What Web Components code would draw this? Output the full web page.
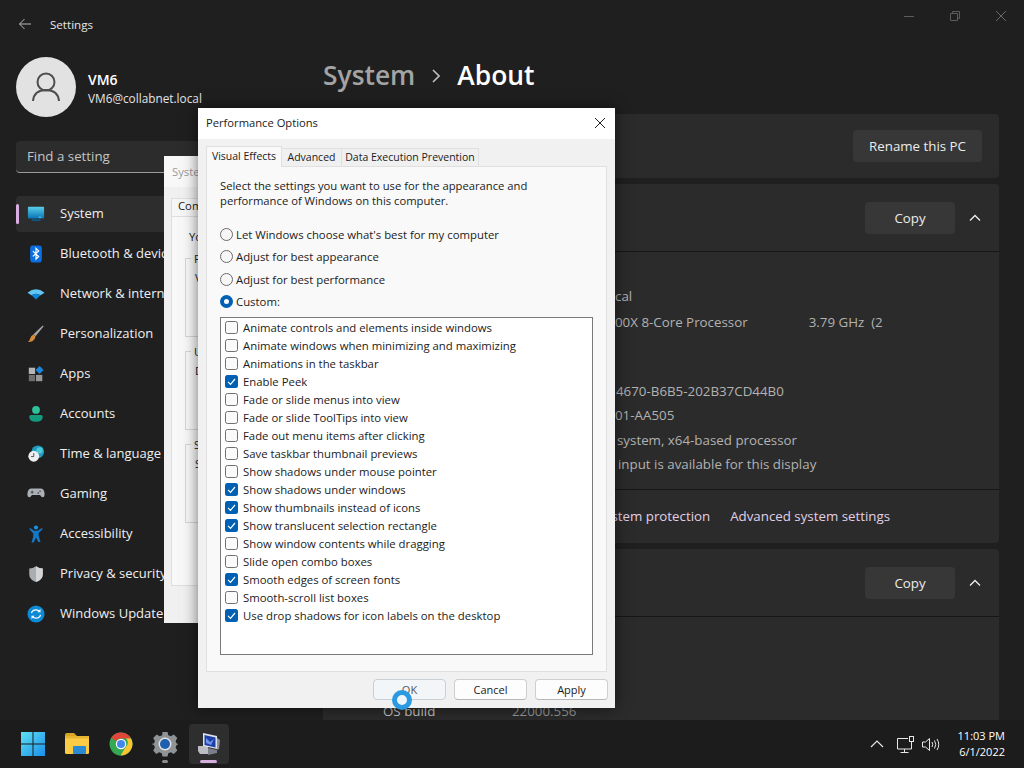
<!DOCTYPE html>
<html lang="en">
<head>
<meta charset="utf-8">
<title>Settings - About</title>
<style>
  html, body { margin: 0; height: 100%; overflow: hidden; }
  body { width: 1024px; height: 768px; position: relative; background: #1f1f1f; font-family: "Open Sans", "Noto Sans", sans-serif; }
  svg { display: block; }
</style>
</head>
<body>

<settings-shell>
  <nav-item slot="nav" selected label="System"><svg viewBox="0 0 20 20" width="18" height="18"><defs><linearGradient id="mon" x1="0" y1="0" x2="0" y2="1"><stop offset="0" stop-color="#58cdea"/><stop offset="1" stop-color="#0874b4"/></linearGradient></defs><rect x="1" y="2" width="18" height="13" rx="1" fill="url(#mon)"/><rect x="5" y="16" width="10" height="1.600" fill="#0a5f96"/><rect x="13" y="13" width="3" height="1" fill="#7fd4ee"/></svg></nav-item>
  <nav-item slot="nav" label="Bluetooth &amp; devices"><svg viewBox="0 0 20 20" width="18" height="18"><path d="M6.500 0.500h7q3 0 3 3.500v11q0 4.500-3 4.500h-7q-3 0-3-4.500v-11q0-3.500 3-3.500z" fill="#0a6fe0"/><path d="M6.500 6.800l6.500 6-3 2.800V3.800l3 2.800-6.500 6" fill="none" stroke="#fff" stroke-width="1.300"/></svg></nav-item>
  <nav-item slot="nav" label="Network &amp; internet"><svg viewBox="0 0 20 20" width="18" height="18"><path d="M0.500 8.500Q10 0.800 19.500 8.500l-4.500 3Q10 8 5 11.500z" fill="#62c6f2"/><path d="M5 11.500Q10 8 15 11.500l-5 4.500z" fill="#1086d6"/></svg></nav-item>
  <nav-item slot="nav" label="Personalization"><svg viewBox="0 0 20 20" width="18" height="18"><path d="M17.500 0.500l1 1L9.500 12.500l-2.500-2z" fill="#a7a7a7"/><path d="M7 10.500l2.500 2.200q-.5 4-3.500 5.300-2.500 1-5 .8 2-1.300 2.500-3.800.5-3 3.500-4.500z" fill="#d58a3c"/></svg></nav-item>
  <nav-item slot="nav" label="Apps"><svg viewBox="0 0 20 20" width="18" height="18"><rect x="2" y="3" width="7" height="7" fill="#b5b5b5"/><rect x="2" y="11" width="7" height="7" fill="#6e6e6e"/><rect x="10" y="11" width="7" height="7" fill="#989898"/><path d="M14 1l4.500 4.500-4.500 4.500-4.500-4.500z" fill="#1a86dc"/></svg></nav-item>
  <nav-item slot="nav" label="Accounts"><svg viewBox="0 0 20 20" width="18" height="18"><circle cx="10" cy="5.500" r="4.300" fill="#2fc09c"/><path d="M2.500 13q0-2 2-2h11q2 0 2 2 0 5.500-7.500 5.500T2.500 13z" fill="#149b7e"/></svg></nav-item>
  <nav-item slot="nav" label="Time &amp; language"><svg viewBox="0 0 20 20" width="18" height="18"><circle cx="12" cy="7.500" r="7" fill="#1f9bc0"/><circle cx="14" cy="6" r="3.500" fill="#4cc8d8"/><circle cx="7.500" cy="12.500" r="6" fill="#eceff2"/><path d="M7.500 9v3.800h-3" fill="none" stroke="#445" stroke-width="1"/></svg></nav-item>
  <nav-item slot="nav" label="Gaming"><svg viewBox="0 0 20 20" width="18" height="18"><path d="M5 4h10q4 0 4.500 5.500.3 4-2 4-1.500 0-3-2.500H5.500q-1.500 2.500-3 2.500-2.300 0-2-4Q1 4 5 4z" fill="#aab0b5"/><path d="M4 8h3.500M5.700 6.300v3.400" stroke="#444" stroke-width="1"/><circle cx="14.500" cy="7" r=".9" fill="#444"/><circle cx="12.500" cy="9" r=".9" fill="#444"/></svg></nav-item>
  <nav-item slot="nav" label="Accessibility"><svg viewBox="0 0 20 20" width="18" height="18"><circle cx="10" cy="2.800" r="2.300" fill="#1a90e0"/><path d="M2.500 4.500l1-1.200 4.500 3h4l4.500-3 1 1.200-4.500 4.500v3l2 7h-2.500L10 14l-2.500 5.500H5l2-7v-3z" fill="#1478c8"/></svg></nav-item>
  <nav-item slot="nav" label="Privacy &amp; security"><svg viewBox="0 0 20 20" width="18" height="18"><path d="M10 1.500q3.500 2.500 7.500 2.500v6.500q0 5.500-7.500 8.500-7.500-3-7.500-8.500V4Q6.500 4 10 1.500z" fill="#a9adb0"/><path d="M10 1.500q3.500 2.500 7.500 2.500v6.500q0 5.500-7.500 8.500z" fill="#d3d5d6"/></svg></nav-item>
  <nav-item slot="nav" label="Windows Update"><svg viewBox="0 0 20 20" width="18" height="18"><circle cx="10" cy="10" r="9.500" fill="#0d8ad6"/><path d="M5 9q.8-3.700 5-3.700 2.500 0 4 2M15 11q-.8 3.700-5 3.700-2.500 0-4-2" fill="none" stroke="#fff" stroke-width="1.400"/><path d="M15 4.500v3.500h-3.500zM5 15.500V12h3.500z" fill="#fff"/></svg></nav-item>

  <info-card>
    <card-button>Rename this PC</card-button>
  </info-card>

  <info-card collapsible>
    <spec-row>cal</spec-row>
    <spec-row style="margin-top:1.600px">00X 8-Core Processor<span style="display:inline-block;width:61px"></span>3.79 GHz&nbsp; (2</spec-row>
    <spec-row style="height:44.600px"></spec-row>
    <spec-row style="--inset:233px">4670-B6B5-202B37CD44B0</spec-row>
    <spec-row>01-AA505</spec-row>
    <spec-row style="--inset:234px">system, x64-based processor</spec-row>
    <spec-row style="--inset:235px">input is available for this display</spec-row>
    <related-links slot="footer">
      <span>stem protection</span><span>Advanced system settings</span>
    </related-links>
  </info-card>

  <info-card collapsible style="--rows-top:81.800px">
    <spec-row label="OS build">22000.556</spec-row>
  </info-card>
</settings-shell>

<system-properties></system-properties>

<legacy-window title="Performance Options">
  <visual-effects></visual-effects>
</legacy-window>

<busy-cursor></busy-cursor>

<task-bar></task-bar>

<script>
(function main() {
  class SettingsShell extends HTMLElement {
    constructor() {
      super();
      this.attachShadow({ mode: "open" });
    }
    connectedCallback() {
      this.shadowRoot.innerHTML = `
        <style>
          :host { display: grid; grid-template-columns: 323px 1fr; grid-template-rows: 48px 672px; width: 1024px; height: 720px; overflow: hidden; background: #1f1f1f; color: #fff; }
          .titlebar { grid-column: 1 / 3; display: flex; align-items: center; }
          .back { width: 50px; padding-left: 18px; box-sizing: border-box; }
          .app { font-size: 11.600px; color: #e6e6e6; }
          .controls { margin-left: auto; display: flex; }
          .controls div { width: 46px; height: 32px; display: grid; place-items: center; margin-top: -16px; }
          aside { padding-top: 9px; min-width: 0; }
          .profile { display: flex; align-items: center; gap: 12px; margin-left: 16px; }
          .avatar { width: 60px; height: 60px; border-radius: 50%; background: #e2e2e2; display: grid; place-items: center; }
          .name { font-size: 14px; font-weight: 600; line-height: 18px; }
          .mail { font-size: 11.800px; line-height: 18px; color: #e4e4e4; }
          .who { margin-top: 3px; }
          .search { margin: 24px 0 23px 16px; width: 284px; height: 32px; box-sizing: border-box; background: #2c2c2c; border-bottom: 1px solid #9a9a9a; border-radius: 4px; padding-left: 11px; font-size: 13.300px; line-height: 31px; color: #c4c4c4; }
          .nav { display: flex; flex-direction: column; gap: 4px; margin-left: 16px; width: 284px; }
          main { padding-right: 25px; min-width: 0; display: flex; flex-direction: column; }
          .crumb { height: 54px; margin-bottom: 12px; flex: none; display: flex; align-items: center; font-size: 26.400px; font-weight: 600; color: #a4a4a4; }
          .crumb svg { margin: 2px 17px 0 17px; }
          .crumb b { color: #fff; font-weight: 600; }
          .cards { display: flex; flex-direction: column; gap: 6px; }
        </style>
        <div class="titlebar">
          <div class="back"><svg width="14" height="12" viewBox="0 0 14 12"><path d="M13 6H1.500M6.500 1L1.500 6l5 5" fill="none" stroke="#b8b8b8" stroke-width="1"/></svg></div>
          <div class="app">Settings</div>
          <div class="controls">
            <div><svg width="10" height="10"><path d="M0 5.500h10" stroke="#5c5c5c"/></svg></div>
            <div><svg width="10" height="10"><path d="M.5 2.500h7v7h-7zM2.500 2.500v-2h7v7h-2" fill="none" stroke="#5c5c5c"/></svg></div>
            <div><svg width="10" height="10"><path d="M0 0l10 10M10 0L0 10" stroke="#6a6a6a"/></svg></div>
          </div>
        </div>
        <aside>
          <div class="profile">
            <div class="avatar"><svg width="32" height="32" viewBox="0 0 32 32"><circle cx="16" cy="11" r="8.500" fill="none" stroke="#4e4e4e" stroke-width="2"/><path d="M3 30q1-11 13-11t13 11" fill="none" stroke="#4e4e4e" stroke-width="2"/></svg></div>
            <div class="who"><div class="name">VM6</div><div class="mail">VM6@collabnet.local</div></div>
          </div>
          <div class="search">Find a setting</div>
          <div class="nav"><slot name="nav"></slot></div>
        </aside>
        <main>
          <div class="crumb">System<svg width="8" height="14" viewBox="0 0 8 14"><path d="M1 1l6 6-6 6" fill="none" stroke="#bdbdbd" stroke-width="1.600"/></svg><b>About</b></div>
          <div class="cards"><slot></slot></div>
        </main>`;
    }
  }
  customElements.define("settings-shell", SettingsShell);

  class NavItem extends HTMLElement {
    constructor() {
      super();
      this.attachShadow({ mode: "open" });
    }
    connectedCallback() {
      const label = this.getAttribute("label");
      this.shadowRoot.innerHTML = `
        <style>
          :host { display: flex; align-items: center; height: 36px; border-radius: 4px; font-size: 13px; color: #f0f0f0; position: relative; white-space: nowrap; }
          :host([selected]) { background: #2d2d2d; }
          :host([selected]) .pill { display: block; }
          .pill { display: none; position: absolute; left: 0; top: 8px; width: 3px; height: 20px; border-radius: 2px; background: #d9aee2; }
          .icon { width: 20px; height: 20px; margin: 0 14px 0 10px; display: grid; place-items: center; }
          .text { position: relative; top: -1px; }
        </style>
        <span class="pill"></span>
        <span class="icon"><slot></slot></span>
        <span class="text">${label}</span>`;
    }
  }
  customElements.define("nav-item", NavItem);

  class InfoCard extends HTMLElement {
    constructor() {
      super();
      this.attachShadow({ mode: "open" });
    }
    connectedCallback() {
      if (!this.hasAttribute("collapsible")) {
        this.shadowRoot.innerHTML = `
          <style>
            :host { display: flex; justify-content: flex-end; align-items: center; height: 64px; padding-right: 17px; background: #2b2b2b; border-radius: 4px; }
          </style>
          <slot></slot>`;
        return;
      }
      this.shadowRoot.innerHTML = `
        <style>
          :host { display: block; background: #2b2b2b; border-radius: 4px; color: #fff; }
          .head { height: 67px; display: flex; justify-content: flex-end; align-items: center; border-bottom: 1px solid #161616; }
          .chev { width: 40px; padding-right: 4px; display: grid; place-items: center; }
          .rows { padding: var(--rows-top, 31.800px) 0 12.600px 60px; }
          ::slotted([slot="footer"]) { border-top: 1px solid #161616; }
        </style>
        <div class="head">
          <card-button narrow>Copy</card-button>
          <div class="chev"><svg width="12" height="8" viewBox="0 0 12 8"><path d="M1 6.500l5-5 5 5" fill="none" stroke="#eee" stroke-width="1.300"/></svg></div>
        </div>
        <div class="rows"><slot></slot></div>
        <slot name="footer"></slot>`;
    }
  }
  customElements.define("info-card", InfoCard);

  class CardButton extends HTMLElement {
    constructor() {
      super();
      this.attachShadow({ mode: "open" });
    }
    connectedCallback() {
      this.shadowRoot.innerHTML = `
        <style>
          :host { display: flex; align-items: center; justify-content: center; height: 32px; width: 129px; background: #373737; border-radius: 4px; font-size: 13.300px; color: #ececec; }
          :host([narrow]) { width: 90px; }
        </style>
        <slot></slot>`;
    }
  }
  customElements.define("card-button", CardButton);

  // rows without a label only show what sticks out from under the dialog
  class SpecRow extends HTMLElement {
    constructor() {
      super();
      this.attachShadow({ mode: "open" });
    }
    connectedCallback() {
      const label = this.getAttribute("label");
      this.shadowRoot.innerHTML = `
        <style>
          :host { display: flex; line-height: 24.400px; font-size: 13.330px; color: #b2b2b2; white-space: nowrap; padding-left: var(--inset, 232px); }
          :host([label]) { padding-left: 0; color: #969696; }
          .label { width: 129px; color: #c4c4c4; }
        </style>
        ${label ? `<span class="label">${label}</span>` : ""}
        <span><slot></slot></span>`;
    }
  }
  customElements.define("spec-row", SpecRow);

  class RelatedLinks extends HTMLElement {
    constructor() {
      super();
      this.attachShadow({ mode: "open" });
    }
    connectedCallback() {
      this.shadowRoot.innerHTML = `
        <style>
          :host { display: flex; justify-content: flex-end; align-items: center; gap: 20px; height: 54px; box-sizing: border-box; padding: 0 109px 2px 0; font-size: 13.300px; color: #e2cfe6; white-space: nowrap; }
        </style>
        <slot></slot>`;
    }
  }
  customElements.define("related-links", RelatedLinks);

  class LegacyWindow extends HTMLElement {
    constructor() {
      super();
      this.attachShadow({ mode: "open" });
    }
    connectedCallback() {
      this.shadowRoot.innerHTML = `
        <style>
          :host { position: absolute; left: 198px; top: 108px; width: 417px; height: 600px; display: flex; flex-direction: column; background: #f1f1f1; color: #1b1b1b; font-size: 11.350px; box-shadow: 0 0 14px rgba(0,0,0,.55); }
          .title { flex: none; height: 31px; box-sizing: border-box; background: #fff; display: flex; align-items: center; justify-content: space-between; padding: 0 9px 2px 8px; font-size: 11.200px; }
          .tabs { flex: none; display: flex; align-items: flex-end; height: 20px; margin: 7px 0 0 8px; font-size: 10.500px; }
          .tab { height: 18px; line-height: 17px; text-align: center; border: 1px solid #e0e0e0; border-width: 1px 1px 0 0; background: #f0f0f0; box-sizing: border-box; }
          .tab.on { width: 76px; height: 21px; line-height: 18px; background: #f9f9f9; border-width: 1px 1px 0 1px; position: relative; z-index: 1; margin-bottom: -1px; }
          .page { flex: none; margin: 0 8px; width: 401px; height: 506px; box-sizing: border-box; background: #f9f9f9; border: 1px solid #e0e0e0; }
          .buttons { flex: none; display: flex; justify-content: flex-end; gap: 8px; padding: 7px 7px 0 0; font-size: 11px; }
          .buttons span { width: 73px; height: 21px; box-sizing: border-box; border: 1px solid #cfcfcf; border-bottom-color: #b8b8b8; border-radius: 4px; background: #fdfdfd; text-align: center; line-height: 19px; }
          .buttons .ok { background: #f3f6f8; border-color: #c8d0d6; color: #555; }
        </style>
        <div class="title">
          <span>${this.getAttribute("title")}</span>
          <svg width="12" height="12" style="display:block"><path d="M1 1l10 10M11 1L1 11" stroke="#222"/></svg>
        </div>
        <div class="tabs"><div class="tab on">Visual Effects</div><div class="tab" style="width:60px">Advanced</div><div class="tab" style="width:137px">Data Execution Prevention</div></div>
        <div class="page"><slot></slot></div>
        <div class="buttons"><span class="ok">OK</span><span>Cancel</span><span>Apply</span></div>`;
    }
  }
  customElements.define("legacy-window", LegacyWindow);

  class VisualEffects extends HTMLElement {
    constructor() {
      super();
      this.attachShadow({ mode: "open" });
    }
    connectedCallback() {
      const radios = ["Let Windows choose what's best for my computer", "Adjust for best appearance", "Adjust for best performance", "Custom:"];
      const checks = [
        ["Animate controls and elements inside windows", 0], ["Animate windows when minimizing and maximizing", 0],
        ["Animations in the taskbar", 0], ["Enable Peek", 1], ["Fade or slide menus into view", 0],
        ["Fade or slide ToolTips into view", 0], ["Fade out menu items after clicking", 0],
        ["Save taskbar thumbnail previews", 0], ["Show shadows under mouse pointer", 0],
        ["Show shadows under windows", 1], ["Show thumbnails instead of icons", 1],
        ["Show translucent selection rectangle", 1], ["Show window contents while dragging", 0],
        ["Slide open combo boxes", 0], ["Smooth edges of screen fonts", 1],
        ["Smooth-scroll list boxes", 0], ["Use drop shadows for icon labels on the desktop", 1]
      ];
      this.shadowRoot.innerHTML = `
        <style>
          :host { display: block; padding: 11px 0 0 13px; }
          p { margin: 0 0 15px; line-height: 15px; font-size: 11.250px; }
          .radio { display: flex; align-items: center; gap: 3px; height: 22.500px; }
          .dot { width: 13px; height: 13px; box-sizing: border-box; border: 1px solid #6b6b6b; border-radius: 50%; background: #f6f6f6; }
          .dot.on { border: 4px solid #0060b4; background: #fff; }
          .list { margin-top: 4px; width: 373px; height: 338px; box-sizing: border-box; background: #fff; border: 1px solid #7a7a7a; padding: 0 0 0 4px; }
          .check { display: flex; align-items: center; gap: 5px; height: 18px; }
          .box { width: 13px; height: 13px; box-sizing: border-box; border: 1px solid #707070; border-radius: 2.500px; background: #fafafa; }
          .box.on { border: 0; background: #0060b4; }
          svg { display: block; }
        </style>
        <p>Select the settings you want to use for the appearance and<br>performance of Windows on this computer.</p>
        ${radios.map((r, i) => `<div class="radio"><span class="dot${i === 3 ? " on" : ""}"></span><span>${r}</span></div>`).join("")}
        <div class="list">
          ${checks.map(c => `<div class="check"><span class="box${c[1] ? " on" : ""}">${c[1] ? '<svg width="13" height="13"><path d="M3 6.800l2.500 2.500L10 4" fill="none" stroke="#fff" stroke-width="1.200"/></svg>' : ""}</span><span>${c[0]}</span></div>`).join("")}
        </div>`;
    }
  }
  customElements.define("visual-effects", VisualEffects);

  // only the strip left of the Performance Options dialog is ever visible
  class SystemProperties extends HTMLElement {
    constructor() {
      super();
      this.attachShadow({ mode: "open" });
    }
    connectedCallback() {
      this.shadowRoot.innerHTML = `
        <style>
          :host { position: absolute; left: 164px; top: 156px; width: 60px; height: 467px; background: #f0f0f0; color: #222; font-size: 11.300px; white-space: nowrap; overflow: hidden; }
          .title { height: 31px; background: #f8f8f8; padding: 9px 0 0 8px; box-sizing: border-box; color: #9a9a9a; line-height: 14px; }
          .tab { margin: 11px 0 0 7px; width: 80px; height: 18px; padding-left: 6px; line-height: 14px; background: #f6f6f6; border: 1px solid #dedede; border-bottom: 0; box-sizing: border-box; }
          .page { margin: 0 7px; width: 400px; height: 370px; box-sizing: border-box; background: #f8f8f8; border: 1px solid #dedede; padding: 13px 0 0 13px; }
          .note { padding-left: 4px; line-height: 14px; margin-bottom: 14px; }
          .group { height: 79px; box-sizing: border-box; border: 1px solid #d6d6d6; margin-bottom: 14px; padding: 12px 0 0 9px; position: relative; line-height: 14px; }
          .group b { font-weight: 400; position: absolute; left: 5px; top: -7px; padding: 0 3px; background: #f8f8f8; }
        </style>
        <div class="title">Syste</div>
        <div class="tab">Com</div>
        <div class="page">
          <div class="note">Yo</div>
          <div class="group"><b>P</b>V</div>
          <div class="group"><b>U</b>D</div>
          <div class="group"><b>S</b>S</div>
        </div>`;
    }
  }
  customElements.define("system-properties", SystemProperties);

  class BusyCursor extends HTMLElement {
    constructor() {
      super();
      this.attachShadow({ mode: "open" });
    }
    connectedCallback() {
      this.shadowRoot.innerHTML = `
        <style>
          :host { position: absolute; left: 392px; top: 690px; width: 20px; height: 20px; }
        </style>
        <svg width="20" height="20" style="display:block"><circle cx="10" cy="10" r="7.500" fill="#eef6fb" stroke="#2c9ae0" stroke-width="5"/></svg>`;
    }
  }
  customElements.define("busy-cursor", BusyCursor);

  class TaskBar extends HTMLElement {
    constructor() {
      super();
      this.attachShadow({ mode: "open" });
    }
    connectedCallback() {
      this.shadowRoot.innerHTML = `
        <style>
          :host { position: absolute; left: 0; top: 720px; width: 1024px; height: 48px; display: flex; align-items: center; background: #1c1c1c; color: #fff; }
          .apps { display: flex; gap: 4px; padding-left: 13px; }
          .tile { width: 40px; height: 40px; display: grid; place-items: center; border-radius: 4px; position: relative; }
          .tile.active { background: #2e2e2e; }
          .tile.open::after, .tile.active::after { content: ""; position: absolute; left: 17px; bottom: 1px; width: 6px; height: 3px; border-radius: 2px; background: #8d8d8d; }
          .tile.active::after { left: 11px; width: 17px; background: #d5aedd; }
          .tray { margin-left: auto; display: flex; align-items: center; padding-right: 19px; }
          .clock { margin-left: 18px; font-size: 11px; line-height: 16px; text-align: right; }
          svg { display: block; }
        </style>
        <div class="apps">
          <div class="tile"><svg width="24" height="24" viewBox="0 0 24 24"><defs><linearGradient id="w" x1="0" y1="0" x2="1" y2="1"><stop offset="0" stop-color="#5fe0f5"/><stop offset="1" stop-color="#1a8fe8"/></linearGradient></defs><path d="M0 0h11.500v11.500H0zM12.500 0H24v11.500H12.500zM0 12.500h11.500V24H0zM12.500 12.500H24V24H12.500z" fill="url(#w)"/></svg></div>
          <div class="tile"><svg width="26" height="24" viewBox="0 0 26 24"><path d="M1 3q0-2 2-2h7l3 3h-12z" fill="#d9a520"/><rect x="1" y="4" width="24" height="18" rx="1.500" fill="#fccb45"/><rect x="1" y="4" width="24" height="2.500" fill="#e8b433"/><rect x="9" y="14" width="13" height="8" rx="1" fill="#2a8ad4"/></svg></div>
          <div class="tile"><svg width="24" height="24" viewBox="0 0 24 24"><circle cx="12" cy="12" r="11.500" fill="#34a853"/><path d="M12 .5A11.500 11.500 0 0 1 22 6.500H12a5.500 5.500 0 0 0-5 3L2.500 5.500A11.500 11.500 0 0 1 12 .5z" fill="#e0463a"/><path d="M22 6.500a11.500 11.500 0 0 1-10.500 17L16.700 15a5.500 5.500 0 0 0 .3-8.500z" fill="#fbc531"/><circle cx="12" cy="12" r="5.200" fill="#fff"/><circle cx="12" cy="12" r="4" fill="#4187ed"/></svg></div>
          <div class="tile open"><svg width="26" height="26" viewBox="0 0 26 26"><path d="M10.500 1h5l.8 3.300 2.500 1 3-1.700 3.500 3.500-1.700 3 1 2.500L27 13l-2.400.9-1 2.500 1.700 3-3.500 3.500-3-1.700-2.500 1-.8 3.300h-5l-.8-3.300-2.500-1-3 1.700L1.200 19.400l1.700-3-1-2.500L-1 13l2.900-.4 1-2.500-1.700-3L4.700 3.600l3 1.700 2.500-1z" fill="#8f9396"/><circle cx="13" cy="13" r="6.500" fill="#dfe3e6"/><circle cx="13" cy="13" r="5" fill="#1f5fae"/></svg></div>
          <div class="tile active"><svg width="25" height="25" viewBox="0 0 25 25"><path d="M1 14h10v8H3l-2-3z" fill="#b9bcc2"/><path d="M6 1l14 3v13L6 14z" fill="#dfe2ea"/><path d="M7.500 3l11 2.400v10L7.500 13z" fill="#1c3fa8"/><path d="M9 6l4 4 4-3-3 6-5-2z" fill="#6f94ea"/><path d="M20 6l3 2-1 9-2 1z" fill="#8b8f9a"/><path d="M11 16l9 2v3l-9 2z" fill="#7a7e88"/></svg></div>
        </div>
        <div class="tray">
          <svg width="14" height="8" viewBox="0 0 14 8"><path d="M1 7l6-6 6 6" fill="none" stroke="#e6e6e6" stroke-width="1.200"/></svg>
          <svg style="margin-left:13px" width="18" height="17" viewBox="0 0 18 17"><path d="M11 2.500H.5v10.500h14V8M7.500 13v3M3.500 16.500h8" fill="none" stroke="#e8e8e8"/><rect x="12.500" y=".5" width="4" height="5" fill="none" stroke="#e8e8e8"/><path d="M14.500 5.500V8" stroke="#e8e8e8"/></svg>
          <svg style="margin-left:7px" width="18" height="15" viewBox="0 0 18 15"><path d="M.5 5h3L7.500 1.500v12L3.500 10h-3z" fill="none" stroke="#e8e8e8"/><path d="M10 5q1.500 2.500 0 5M12.500 3.500q2.500 4 0 8M15 2q3.500 5.500 0 11" fill="none" stroke="#e8e8e8"/></svg>
          <div class="clock"><div>11:03 PM</div><div>6/1/2022</div></div>
        </div>`;
    }
  }
  customElements.define("task-bar", TaskBar);
})();
</script>
</body>
</html>
